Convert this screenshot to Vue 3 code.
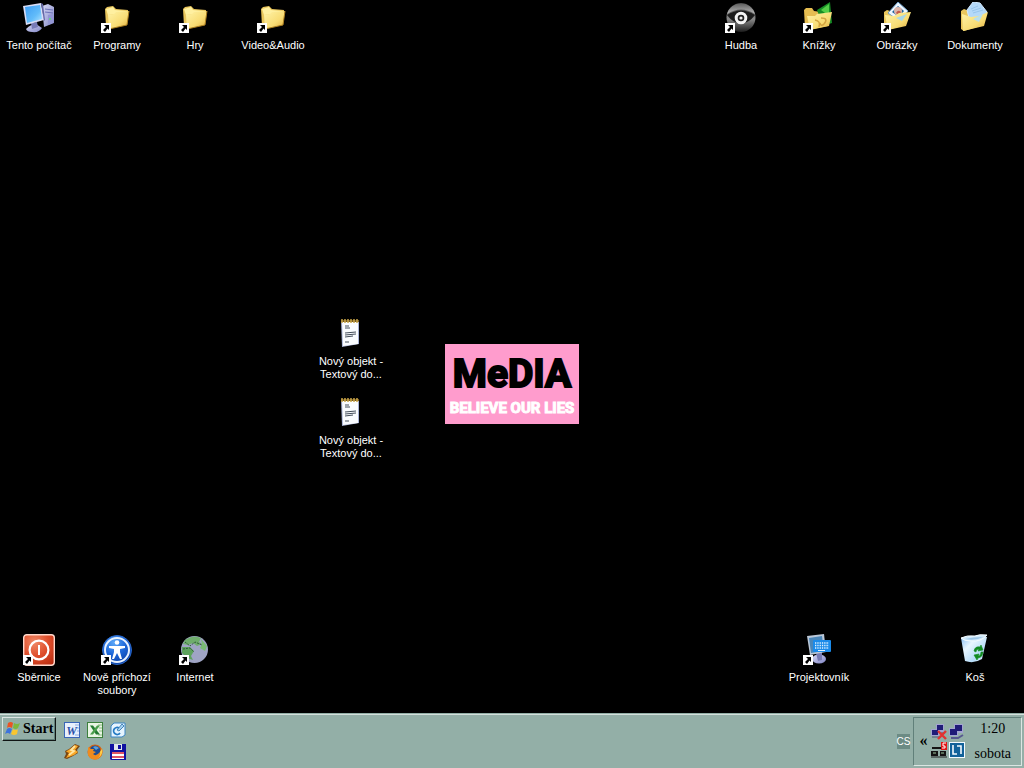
<script setup>
const icons = [
  { kind: 'computer', label: 'Tento počítač', col: 0, row: 0 },
  { kind: 'folder', label: 'Programy', col: 1, row: 0, link: true },
  { kind: 'folder', label: 'Hry', col: 2, row: 0, link: true },
  { kind: 'folder', label: 'Video&Audio', col: 3, row: 0, link: true },
  { kind: 'music', label: 'Hudba', col: 9, row: 0, link: true },
  { kind: 'books', label: 'Knížky', col: 10, row: 0, link: true },
  { kind: 'pictures', label: 'Obrázky', col: 11, row: 0, link: true },
  { kind: 'documents', label: 'Dokumenty', col: 12, row: 0 },
  { kind: 'note', label: 'Nový objekt - Textový do...', col: 4, row: 4 },
  { kind: 'note', label: 'Nový objekt - Textový do...', col: 4, row: 5 },
  { kind: 'power', label: 'Sběrnice', col: 0, row: 8, link: true },
  { kind: 'access', label: 'Nově příchozí soubory', col: 1, row: 8, link: true },
  { kind: 'globe', label: 'Internet', col: 2, row: 8, link: true },
  { kind: 'keyboard', label: 'Projektovník', col: 10, row: 8, link: true },
  { kind: 'bin', label: 'Koš', col: 12, row: 8 }
]
const place = (i) => ({ left: i.col * 78 + 'px', top: i.row * 79 + 2 + 'px' })
const launchers = ['Word', 'Excel', 'Outlook', 'Winamp', 'Firefox', 'Commander']
</script>

<template>
  <div class="screen">
    <svg class="defs" aria-hidden="true">
      <defs>
        <linearGradient id="gFolder" x1="0" y1="0" x2="1" y2="1">
          <stop offset="0" stop-color="#fff3a8" /><stop offset=".6" stop-color="#f8dc74" /><stop offset="1" stop-color="#dda93a" />
        </linearGradient>
        <linearGradient id="gScreen" x1="0" y1="0" x2="1" y2="1">
          <stop offset="0" stop-color="#3c9cf4" /><stop offset=".6" stop-color="#62bcfa" /><stop offset="1" stop-color="#b4e6ff" />
        </linearGradient>
        <linearGradient id="gCase" x1="0" y1="0" x2="1" y2="1">
          <stop offset="0" stop-color="#dadcf8" /><stop offset="1" stop-color="#7f84c4" />
        </linearGradient>
        <linearGradient id="gEye" x1="0" y1="0" x2="0" y2="1">
          <stop offset="0" stop-color="#5c5c5c" /><stop offset="1" stop-color="#bcbcbc" />
        </linearGradient>
        <linearGradient id="gEyeLow" x1="0" y1="0" x2="0" y2="1">
          <stop offset="0" stop-color="#2c2c2c" /><stop offset=".55" stop-color="#8a8a8a" /><stop offset="1" stop-color="#1c1c1c" />
        </linearGradient>
        <radialGradient id="gRed" cx=".35" cy=".25" r=".9">
          <stop offset="0" stop-color="#f08a68" /><stop offset=".5" stop-color="#df4f2c" /><stop offset="1" stop-color="#b92c10" />
        </radialGradient>
        <radialGradient id="gBlue" cx=".4" cy=".25" r=".8">
          <stop offset="0" stop-color="#5ca8f8" /><stop offset=".5" stop-color="#1c66d8" /><stop offset="1" stop-color="#0a3ca0" />
        </radialGradient>
        <linearGradient id="gBin" x1="0" y1="0" x2="1" y2="1">
          <stop offset="0" stop-color="#7fb8f0" /><stop offset=".35" stop-color="#e8f6ff" /><stop offset=".7" stop-color="#b6dcf8" /><stop offset="1" stop-color="#e6f4ff" />
        </linearGradient>
      </defs>
    </svg>

    <main class="desktop">
      <div class="wallpaper">
        <div class="poster">
          <span class="media">MeDIA</span>
          <span class="lies">BELIEVE OUR LIES</span>
        </div>
      </div>

      <button v-for="(i, n) in icons" :key="n" class="item" type="button" :style="place(i)">
        <svg class="pic" viewBox="0 0 32 32" aria-hidden="true">
          <g v-if="i.kind === 'computer'">
            <path d="M19 4 25 2 31 5V21L21 25Z" fill="url(#gCase)" />
            <path d="M22 7 30 8M22 10 30 11" stroke="#6d72b8" />
            <path d="M25 13 30 12V21L25 23Z" fill="#9396d4" />
            <circle cx="27" cy="17" r="1" fill="#59df6a" />
            <path d="M3 27Q8 22 13 22L19 26Q16 31 9 30Q4 30 3 27Z" fill="url(#gCase)" />
            <path d="M8 21 14 20 15 25 9 27Z" fill="#777bb8" />
            <path d="M0 4 18 1 21 18 3 23Z" fill="#d9ddf6" />
            <path d="M18 1 20 2 22 18 21 19Z" fill="#6467a8" />
            <path d="M2 5 17 3 19 17 4 21Z" fill="url(#gScreen)" />
          </g>
          <g v-else-if="i.kind === 'folder'">
            <path d="M4 7 6 5 12 4 15 7 27 8 26 22 8 27 5 24Z" fill="#e9c65c" />
            <path d="M5 7 12 5 14 8 26 9 25 11 7 13Z" fill="#fff0a0" />
            <path d="M7 13 13 12 15 10 28 9 26 23 8 27Z" fill="url(#gFolder)" />
            <path d="M8 27 26 23 28 9" fill="none" stroke="#a97d20" />
          </g>
          <g v-else-if="i.kind === 'music'">
            <circle cx="16" cy="15.5" r="14.5" fill="url(#gEyeLow)" />
            <path d="M2 12A14.5 14.5 0 0 1 30 12Q16 3 2 12Z" fill="url(#gEye)" />
            <path d="M2 13Q16 4 30 13Q24 21 16 22Q8 21 2 13Z" fill="#1c1c1c" />
            <circle cx="16" cy="16" r="4.8" fill="#222" stroke="#f4f4f4" stroke-width="3" />
            <circle cx="16" cy="16" r="1.6" fill="#ececec" />
          </g>
          <g v-else-if="i.kind === 'books'">
            <path d="M1 8 3 6 9 6 11 9 18 10 26 10 25 24 5 28 2 26Z" fill="#e6bd51" />
            <path d="M14 8 27 0 29 21 20 24Z" fill="#168b24" />
            <path d="M18 8 26 2 26 14Z" fill="#54ce48" />
            <path d="M4 14 12 14 14 12 29 10 26 24 7 28Z" fill="url(#gFolder)" />
            <path d="M12 18Q18 19 16 25M18 16Q26 16 21 22Q18 25 17 21" fill="none" stroke="#d3a440" stroke-width="1.500" />
          </g>
          <g v-else-if="i.kind === 'pictures'">
            <path d="M3 10 6 8 12 10 23 8 25 23 6 28 3 25Z" fill="#e9c65c" />
            <path d="M7 11 17 0 27 9 18 19Z" fill="#edf6ff" stroke="#6a9dc8" />
            <path d="M11 10 17 4 23 9 18 15Z" fill="#1e659d" />
            <circle cx="17" cy="9" r="4" fill="#dbb4a9" /><path d="M15 11Q17 7 20 10L18 14Z" fill="#c55a4b" />
            <path d="M4 13 13 14 18 11 30 10 25 24 7 28Z" fill="url(#gFolder)" />
            <path d="M15 16 26 12 21 19Z" fill="#a8d6e7" />
          </g>
          <g v-else-if="i.kind === 'documents'">
            <path d="M2 9 5 7 10 9 23 7 25 23 5 29 2 27Z" fill="#e9c65c" />
            <path d="M8 8 14 0 21 1 28 10 20 20 10 16Z" fill="#b4d9f9" stroke="#d4eaff" />
            <path d="M12 7 19 4M13 9 22 6M14 11 24 8" stroke="#98c5ec" />
            <path d="M3 12 12 15 20 14 29 10 25 24 4 29Z" fill="url(#gFolder)" />
            <path d="M14 17 24 12 20 20Z" fill="#b9dfec" />
          </g>
          <g v-else-if="i.kind === 'note'">
            <path d="M6 3H24V26L7 29Z" fill="#a9b3d5" />
            <path d="M7 3H23V26L8 28Z" fill="#fafcff" />
            <path d="M6 3H24" stroke="#765a20" stroke-width="2" />
            <path d="M7 1V5M10 1V5M13 1V5M16 1V5M19 1V5M22 1V5" stroke="#c9a548" stroke-width="1.5" />
            <path d="M10 8H14M10 10H15M10 15 21 14M10 17 21 16M10 19 18 18M10 24H14" stroke="#444e5b" />
          </g>
          <g v-else-if="i.kind === 'power'">
            <rect x=".7" y=".7" width="30.6" height="30.6" rx="3" fill="url(#gRed)" stroke="#ffd9cc" stroke-width="1.4" />
            <circle cx="16" cy="16" r="9.4" fill="none" stroke="#fff" stroke-width="2.2" />
            <path d="M16 11V21" stroke="#fff" stroke-width="2" />
          </g>
          <g v-else-if="i.kind === 'access'">
            <circle cx="16" cy="16" r="14.5" fill="url(#gBlue)" stroke="#2a67c8" />
            <circle cx="16" cy="16" r="12" fill="none" stroke="#e8f2ff" stroke-width="2" />
            <circle cx="16" cy="8.5" r="2.3" fill="#fff" />
            <path d="M8 12 14 12H18L24 12V14L19 15V18L21 25H19L16 19 13 25H11L13 18V15L8 14Z" fill="#fff" />
          </g>
          <g v-else-if="i.kind === 'globe'">
            <circle cx="15.5" cy="15.5" r="13.5" fill="#9fa4c4" />
            <path d="M6 6Q14 0 22 4L20 8 23 10 18 12 14 9 9 11 4 10Z" fill="#6fad6c" />
            <path d="M3 13 11 13 15 17 12 22 14 26 8 24 3 19Z" fill="#5da25c" />
            <path d="M22 5 28 12 26 17 21 14 23 10Z" fill="#7aba75" />
            <path d="M6 8 11 12 16 8 23 11M4 15 11 14 15 18" fill="none" stroke="#31593a" stroke-dasharray="2 1" />
          </g>
          <g v-else-if="i.kind === 'keyboard'">
            <ellipse cx="16" cy="25" rx="7" ry="4.5" fill="url(#gCase)" />
            <path d="M13 19 19 18 19 26 15 27Z" fill="#777bb4" />
            <path d="M4 2 21 0 23 18 7 21Z" fill="#bbc8d8" />
            <path d="M6 4 19 2 21 17 8 19Z" fill="#4a86b8" />
            <rect x="10" y="6" width="18" height="12" rx="1" fill="#1b8bea" />
            <path d="M12 9H26M12 11.5H26M12 14H26" stroke="#e3f4ff" stroke-width="1.3" stroke-dasharray="1.3 1" />
            <path d="M15 16.5H22" stroke="#e3f4ff" />
          </g>
          <g v-else>
            <path d="M2 4Q14 8 16 2Q20 0 28 3L23 25Q15 30 6 27Z" fill="url(#gBin)" />
            <path d="M2 4Q8 1 16 2Q20 0 28 1Q22 8 12 7Q5 7 2 4Z" fill="#cfe9fa" stroke="#f4fbff" />
            <path d="M6 5Q14 3 24 3Q17 7 6 5Z" fill="#9cc6e8" />
            <path d="M15 17Q16 12 21 13L22 11 24 16 19 17 20 15Q17 15 17 18ZM24 18Q24 23 19 24L18 26 15 21 20 20 19 22Q22 22 22 18Z" fill="#118b20" stroke="#118b20" stroke-width=".6" />
          </g>
          <g v-if="i.link">
            <path d="M0 21H10V31H0Z" fill="#fff" />
            <path d="M3 23H8V28L6.500 26.500 4 30 2 28 5 25Z" fill="#000" />
          </g>
        </svg>
        <span class="label">{{ i.label }}</span>
      </button>
    </main>

    <footer class="taskbar">
      <button class="start" type="button">
        <svg class="flag" viewBox="0 0 16 16" aria-hidden="true">
          <path d="M3 2Q6 0 8 2L7 7Q4 5 2 7Z" fill="#ea5424" />
          <path d="M9 2Q12 4 15 2L13 7Q11 9 8 7Z" fill="#7db73c" />
          <path d="M2 8Q4 6 7 8L5 13Q3 11 0 13Z" fill="#3d73dd" />
          <path d="M8 8Q11 10 13 8L12 13Q9 15 6 13Z" fill="#f8c630" />
        </svg>
        <span>Start</span>
      </button>

      <nav class="launch">
        <button v-for="l in launchers" :key="l" type="button" :aria-label="l">
          <svg viewBox="0 0 16 16" aria-hidden="true">
            <g v-if="l === 'Word'">
              <rect x=".5" y=".5" width="15" height="15" fill="#e8f0fc" stroke="#3a66b8" />
              <path d="M11 3H15M11 13H15M13 6H15M13 9H15" stroke="#8faee0" />
              <text x="7.500" y="12.500" text-anchor="middle" class="glyph word">W</text>
            </g>
            <g v-else-if="l === 'Excel'">
              <rect x=".5" y=".5" width="15" height="15" fill="#e9f5e4" stroke="#3c803c" />
              <path d="M11 3H15M11 13H15M12 6H15M12 9H15" stroke="#8bbb83" />
              <path d="M3 3.500H6L13 12.500H9Z" fill="#227a30" /><path d="M10 3.500H13L6 12.500H3Z" fill="#4a9e4c" />
            </g>
            <g v-else-if="l === 'Outlook'">
              <path d="M4 1H15V13L12 15H1V4Z" fill="#e6f4ff" stroke="#3c86c4" />
              <path d="M9 6A3.500 3.500 0 1 0 10 11" fill="none" stroke="#247ac4" stroke-width="1.8" />
              <path d="M7 8 12 2 14 4 9 9Z" fill="#a5d2f2" stroke="#2870a8" stroke-width=".8" />
            </g>
            <g v-else-if="l === 'Winamp'">
              <path d="M11 0 5 5 1 7 2 10 0 14 3 15 9 12 14 9 13 6 16 2Z" fill="#7a4714" />
              <path d="M11 1 6 5 2 7.500 5 9 2 14 10 11 14 8 11 6 14 2Z" fill="#f9a928" />
              <path d="M11 2 7 6 10 7 5 11" fill="none" stroke="#ffe5a0" stroke-width="1.8" />
            </g>
            <g v-else-if="l === 'Firefox'">
              <circle cx="8" cy="8" r="7.500" fill="#d9620e" />
              <circle cx="8" cy="7" r="5.500" fill="#1e4d92" />
              <path d="M6 3Q9 1 12 4L9 6Z" fill="#5c9fd8" />
              <path d="M1 3 4 5 7 5 6 7 9 8 6 10Q9 13 13 8L15 4Q17 11 11 15Q4 17 1 11Z" fill="#ef8b1e" />
              <path d="M13 8 15 5Q16 11 11 14 14 11 13 8Z" fill="#ffd34b" />
            </g>
            <g v-else>
              <path d="M0 0H16V16H1L0 15Z" fill="#1010a0" />
              <path d="M4 0H12V6H4Z" fill="#dfe5ec" /><path d="M8 1H11V5H8Z" fill="#1010a0" />
              <path d="M2 8H14V15H2Z" fill="#fff" /><path d="M2 9H14M2 13H14" stroke="#d81f32" stroke-width="1.500" />
            </g>
          </svg>
        </button>
      </nav>

      <div class="lang">CS</div>

      <section class="tray">
        <button class="more" type="button" aria-label="Další ikony">«</button>
        <div class="status">
          <svg viewBox="0 0 16 16" aria-hidden="true">
            <path d="M5 0H13V8H5ZM0 5H8V12H0Z" fill="#a3a5d0" /><path d="M6 1H12V6H6ZM1 6H7V11H1Z" fill="#201c78" />
            <path d="M1 13H9M9 9H14" stroke="#54577c" />
            <path d="M7 7 15 15M15 7 7 15" stroke="#e33232" stroke-width="2.400" />
          </svg>
          <svg viewBox="0 0 16 16" aria-hidden="true">
            <path d="M5 0H14V9H5ZM0 4H9V12H0Z" fill="#a3a5d0" /><path d="M6 1H13V7H6ZM1 5H8V11H1Z" fill="#201c78" />
            <path d="M2 14H9L14 11" fill="none" stroke="#575990" stroke-width="2" />
          </svg>
          <svg viewBox="0 0 16 16" aria-hidden="true">
            <path d="M1 5H15V7H1ZM0 9H7V14H0ZM9 9H15V14H9Z" fill="#141414" />
            <path d="M2 11H5M10 11H13" stroke="#9ec69e" /><path d="M0 15H16" stroke="#222" />
            <path d="M10 0H16V8H10Z" fill="#e01717" /><path d="M15 1H12V4H14V6H11" fill="none" stroke="#fff" />
          </svg>
          <svg viewBox="0 0 16 16" aria-hidden="true">
            <rect x=".5" y=".5" width="15" height="15" fill="#12629a" stroke="#f3fbff" />
            <path d="M4 3V12H8M8 4H12V12" fill="none" stroke="#f3fbff" stroke-width="1.600" />
          </svg>
        </div>
        <div class="clock"><time>1:20</time><span>sobota</span></div>
      </section>
    </footer>
  </div>
</template>

<style>
body { margin: 0; background: #000; }
</style>

<style scoped>
.screen {
  display: flex;
  flex-direction: column;
  min-height: 100vh;
  background: #000;
  overflow: hidden;
}
.defs { position: absolute; width: 0; height: 0; }
button { margin: 0; padding: 0; border: 0; background: none; color: inherit; font: inherit; }
svg { display: block; }

.desktop { position: relative; flex: 1; }
.wallpaper {
  position: absolute;
  inset: 0;
  height: 100vh;
  display: flex;
  align-items: center;
  justify-content: center;
}
.poster {
  display: flex;
  flex-direction: column;
  align-items: center;
  justify-content: center;
  width: 134px;
  height: 80px;
  background: #ff9ccd;
  font-family: Roboto, "Liberation Sans", sans-serif;
  font-weight: bold;
  white-space: nowrap;
}
.media { font-size: 39px; line-height: 48px; color: #000; -webkit-text-stroke: 2px #000; }
.lies { font-size: 15px; line-height: 20px; color: #fff; -webkit-text-stroke: 1px #fff; }

.item {
  position: absolute;
  display: flex;
  flex-direction: column;
  align-items: center;
  gap: 5px;
  width: 78px;
  color: #fff;
  font: 11px/13px "Liberation Sans", sans-serif;
}
.pic { width: 32px; height: 32px; }
.label { padding: 0 2px; text-align: center; }

.taskbar {
  position: relative;
  display: flex;
  align-items: flex-start;
  box-sizing: border-box;
  padding: 2px;
  border-top: 1px solid #93afa7;
  box-shadow: inset 0 1px #d3dfdb;
  background: #93afa7;
  color: #000;
  font-family: "Liberation Serif", serif;
}
.start {
  display: flex;
  align-items: center;
  gap: 2px;
  height: 24px;
  padding: 0 2px;
  margin-top: 1px;
  border: 1px solid;
  border-color: #dbe5e2 #101514 #101514 #dbe5e2;
  box-shadow: inset -1px -1px #61807a;
  font-size: 14px;
  line-height: 20px;
  font-weight: bold;
}
.flag { width: 16px; height: 16px; }
.launch {
  display: grid;
  grid-template-columns: repeat(3, 16px);
  gap: 6px 7px;
  margin: 6px auto 0 8px;
}
.launch svg { width: 16px; height: 16px; }
.glyph { font-family: "Liberation Serif", serif; font-weight: bold; font-style: italic; }
.word { font-size: 12px; fill: #2850a8; }
.lang {
  align-self: center;
  height: 15px;
  margin-right: 3px;
  background: #6c8b84;
  color: #fff;
  font: 10px/15px "Liberation Sans", sans-serif;
}
.tray {
  display: flex;
  align-items: center;
  box-sizing: border-box;
  height: 49px;
  margin-top: 1px;
  padding: 0 10px 2px 4px;
  border: 1px solid;
  border-color: #61807a #dbe5e2 #dbe5e2 #61807a;
}
.more { width: 10px; margin-right: 3px; font-size: 16px; line-height: 20px; font-weight: bold; }
.status { display: grid; grid-template-columns: 16px 16px; gap: 2px; }
.status svg { width: 16px; height: 16px; }
.clock {
  display: flex;
  flex-direction: column;
  align-items: center;
  margin-left: 9px;
  font-size: 14px;
  line-height: 25px;
}
</style>
